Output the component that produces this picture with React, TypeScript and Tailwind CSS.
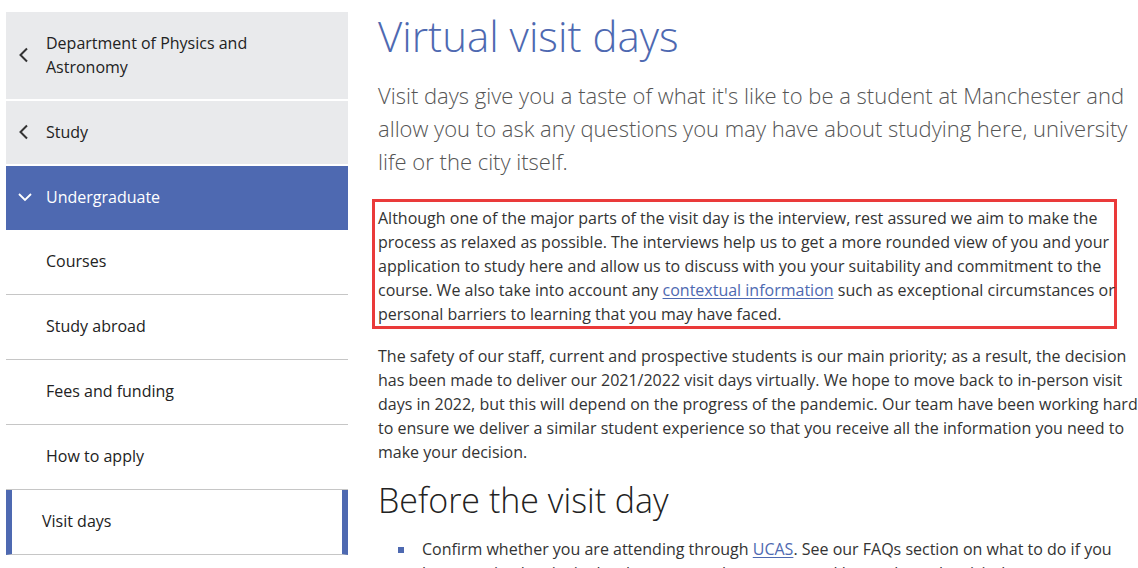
const navTop = [
  { label: 'Department of Physics and Astronomy', tall: true },
  { label: 'Study', tall: false },
];

const subItems = ['Courses', 'Study abroad', 'Fees and funding', 'How to apply'];

const ChevronLeft = () => (
  <svg width="12" height="16" viewBox="0 0 12 16" className="shrink-0">
    <path d="M10 1.5 L3.5 8 L10 14.5" fill="none" stroke="#333" strokeWidth="2" />
  </svg>
);

const ChevronDown = () => (
  <svg width="14" height="10" viewBox="0 0 14 10" className="shrink-0">
    <path d="M1 2 L7 8 L13 2" fill="none" stroke="#fff" strokeWidth="1.8" />
  </svg>
);

const Sidebar = () => (
  <nav className="w-[342px] shrink-0 text-[16px] leading-[24px] text-[#222]">
    {navTop.map((item) => (
      <div
        key={item.label}
        className={`flex items-center bg-[#e9eaec] border-b-2 border-white pl-[11px] pr-4 pb-[2px] ${item.tall ? 'h-[89px]' : 'h-[65px]'}`}
      >
        <ChevronLeft />
        <span className="ml-[17px] w-[240px]">{item.label}</span>
      </div>
    ))}
    <div className="flex items-center bg-[#4e69b1] h-[64px] pl-[12px] pb-[2px] text-white">
      <ChevronDown />
      <span className="ml-[14px]">Undergraduate</span>
    </div>
    {subItems.map((label) => (
      <div key={label} className="flex items-center h-[65px] border-b border-[#c6c6c6] pl-[40px] pb-[2px]">
        {label}
      </div>
    ))}
    <div className="flex items-center h-[65px] border-b border-[#c6c6c6] border-x-[6px] border-x-[#4e69b1] pl-[30px] pb-[2px]">
      Visit days
    </div>
  </nav>
);

export default function App() {
  return (
    <div
      className="flex bg-white pt-[12px] pl-[6px] h-[568px] overflow-hidden"
      style={{ fontFamily: '"Open Sans", sans-serif' }}
    >
      <Sidebar />
      <main className="ml-[30px] w-[760px] -mt-[12px] text-[16px] leading-[24px] text-[#333]">
        <h1 className="text-[42px] leading-[56px] font-light text-[#4e69b1] mt-[8px]">Virtual visit days</h1>
        <p className="text-[22px] leading-[33px] font-light text-[#555] mt-[15px] pr-[6px]">
          Visit days give you a taste of what it's like to be a student at Manchester and allow you to ask any
          questions you may have about studying here, university life or the city itself.
        </p>
        <div className="w-[745px] -ml-[6px] mt-[21px] border-[3px] border-[#ea3a3a] pl-[3px] pr-0 pt-[4px]">
          <p className="w-[742px]">
            Although one of the major parts of the visit day is the interview, rest assured we aim to make the
            process as relaxed as possible. The interviews help us to get a more rounded view of you and your
            application to study here and allow us to discuss with you your suitability and commitment to the
            course. We also take into account any{' '}
            <a href="#" className="text-[#4e69b1] underline underline-offset-2">
              contextual information
            </a>{' '}
            such as exceptional circumstances or personal barriers to learning that you may have faced.
          </p>
        </div>
        <p className="mt-[15px]">
          The safety of our staff, current and prospective students is our main priority; as a result, the decision
          has been made to deliver our 2021/2022 visit days virtually. We hope to move back to in-person visit days in
          2022, but this will depend on the progress of the pandemic. Our team have been working hard to ensure we
          deliver a similar student experience so that you receive all the information you need to make your decision.
        </p>
        <h2 className="text-[34px] leading-[44px] font-light text-[#222] mt-[14px]">Before the visit day</h2>
        <ul className="mt-[15px] pl-[20px]">
          <li className="flex">
            <span className="w-[6px] h-[6px] bg-[#4e69b1] mt-[10px] shrink-0" />
            <span className="ml-[18px]">
              Confirm whether you are attending through{' '}
              <a href="#" className="text-[#4e69b1] underline underline-offset-2">
                UCAS
              </a>
              . See our FAQs section on what to do if you have received an invite but have not yet been contacted by
              us about the visit day.
            </span>
          </li>
        </ul>
      </main>
    </div>
  );
}
